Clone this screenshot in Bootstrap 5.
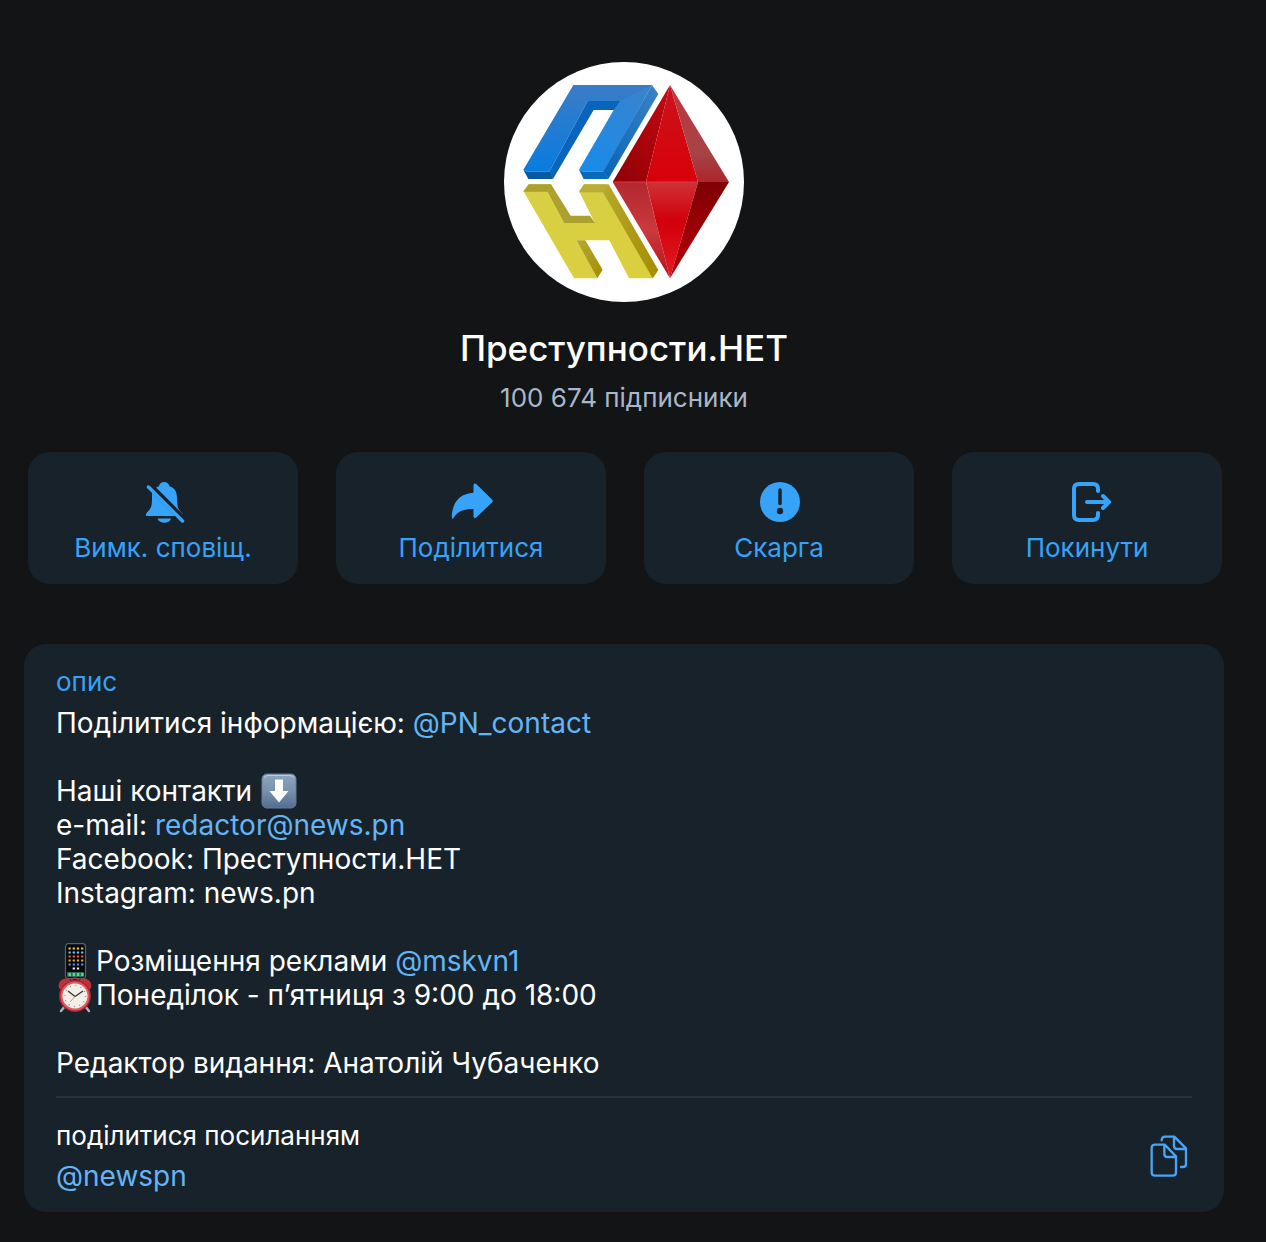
<!DOCTYPE html>
<html lang="uk">
<head>
<meta charset="utf-8">
<meta name="viewport" content="width=device-width, initial-scale=1">
<title>Преступности.НЕТ</title>
<link href="https://cdn.jsdelivr.net/npm/bootstrap@5.3.0/dist/css/bootstrap.min.css" rel="stylesheet">
<style>
  body { background: #131416; color: #fff; font-family: Inter, "Noto Sans", sans-serif; font-size: 28px; line-height: 34px; }
  a { color: #64b5f6; text-decoration: none; }
  a:hover { text-decoration: underline; }
  .profile { padding: 62px 42px 30px 24px; }
  .avatar { width: 240px; height: 240px; }
  .channel-name { font-size: 35px; line-height: 44px; font-weight: 500; margin: 24px 0 0; }
  .subscribers { font-size: 26px; line-height: 34px; color: #a9b7c8; margin: 11px 0 0; }
  .actions { gap: 38px; margin: 37px 2px 60px 4px; }
  .action { flex: 1 1 0; min-width: 0; height: 132px; padding: 28px 8px 19px; border-radius: 22px; border: 0; background: #18222b; color: #36a3f8; font-size: 26px; line-height: 34px; }
  .action:hover, .action:active { background: #202c37 !important; color: #36a3f8 !important; }
  .action svg { width: 44px; height: 44px; margin-bottom: 7px; overflow: visible; }
  .info { background: #18222b; border-radius: 22px; padding: 21px 32px 19px; }
  .caption { font-size: 26px; line-height: 34px; margin: 0; }
  .accent { color: #36a3f8; }
  .about { margin: 7px 0 16px; white-space: pre-line; }
  .emoji { width: 36px; height: 36px; margin: -6px 3px -3px 1px; vertical-align: -5px; }
  .share { border-top: 2px solid #26323e; padding-top: 21px; }
  .handle { margin-top: 6px; }
  .copy { padding: 0; border: 0; background: none; color: #46a5f5; line-height: 0; margin-right: 4px; }
  .copy svg { width: 38px; height: 42px; }
</style>
<script defer src="https://cdn.jsdelivr.net/npm/bootstrap@5.3.0/dist/js/bootstrap.bundle.min.js"></script>
</head>
<body>
<main class="profile">
  <header class="d-flex flex-column align-items-center text-center">
    <svg class="avatar" viewBox="12 21 720 720" role="img" aria-label="Логотип">
      <defs>
        <linearGradient id="bl" x1="0" y1="0" x2="0" y2="1"><stop offset="0" stop-color="#3b7cc6"/><stop offset="1" stop-color="#087ce0"/></linearGradient>
        <linearGradient id="br" x1="1" y1="0" x2="0" y2="1"><stop offset="0" stop-color="#3b82cc"/><stop offset="1" stop-color="#168ceb"/></linearGradient>
        <linearGradient id="bs" x1="1" y1="0" x2="0" y2="1"><stop offset="0" stop-color="#3c82c6"/><stop offset="1" stop-color="#0863b5"/></linearGradient>
        <linearGradient id="ye" x1="0" y1="0" x2="1" y2="1"><stop offset="0" stop-color="#d8cf45"/><stop offset="1" stop-color="#dacf3e"/></linearGradient>
        <linearGradient id="ys" x1="0" y1="0" x2="1" y2="1"><stop offset="0" stop-color="#b6a92d"/><stop offset="1" stop-color="#a58c02"/></linearGradient>
        <linearGradient id="r1" x1="1" y1="0" x2="0" y2="1"><stop offset="0" stop-color="#c60814"/><stop offset="1" stop-color="#8e0005"/></linearGradient>
        <linearGradient id="r2" x1="0" y1="0" x2="0" y2="1"><stop offset="0" stop-color="#c9141c"/><stop offset="1" stop-color="#d90008"/></linearGradient>
        <linearGradient id="r3" x1="0" y1="0" x2="0" y2="1"><stop offset="0" stop-color="#c4333a"/><stop offset=".7" stop-color="#a54448"/><stop offset="1" stop-color="#ad252b"/></linearGradient>
        <linearGradient id="r4" x1="0" y1="0" x2="0" y2="1"><stop offset="0" stop-color="#b2282f"/><stop offset=".5" stop-color="#ca393e"/><stop offset="1" stop-color="#b81019"/></linearGradient>
        <linearGradient id="r5" x1="0" y1="0" x2="0" y2="1"><stop offset="0" stop-color="#ce3138"/><stop offset=".4" stop-color="#d2000a"/><stop offset="1" stop-color="#e31b25"/></linearGradient>
        <linearGradient id="r6" x1="0" y1="0" x2="0" y2="1"><stop offset="0" stop-color="#7e0004"/><stop offset="1" stop-color="#b9000a"/></linearGradient>
      </defs>
      <circle cx="372" cy="381" r="360" fill="#fff"/>
      <path fill="url(#br)" d="M456 90 312 350H250L237 344 358 136 400 90z"/>
      <path fill="url(#bl)" d="M220 90H456L360 138H263L148 350H82L70 344z"/>
      <path fill="#0964bd" d="M263 138H360L342 165H281L159 372 148 350z"/>
      <path fill="url(#bs)" d="M456 90 475 117 325 372 310 350z"/>
      <path fill="#0759a4" d="M70 344 82 350H150L159 372H85z"/>
      <path fill="#0b69bc" d="M237 344 250 350H311L325 372H251z"/>
      <path fill="url(#ye)" d="M70 408 86 388H153L210 503H284L237 408 252 388H318L459 642 475 645 458 670H387L328 556H229L292 670H222z"/>
      <path fill="#aca12e" d="M86 388H153L212 482H270L285 504H193L143 410H70z"/>
      <path fill="#b9ad38" d="M252 388H326L310 412H237z"/>
      <path fill="url(#ys)" d="M326 388 475 645 458 670 308 410z"/>
      <path fill="url(#ys)" d="M229 556H256L308 644 292 670z"/>
      <path fill="url(#r1)" d="M510 90 338 381H438z"/>
      <path fill="url(#r2)" d="M510 90 438 381H594z"/>
      <path fill="url(#r3)" d="M510 90 594 381H687z"/>
      <path fill="url(#r4)" d="M338 381H438L510 670z"/>
      <path fill="url(#r5)" d="M438 381H594L510 670z"/>
      <path fill="url(#r6)" d="M594 381H687L510 670z"/>
      <path fill="none" stroke="#dc3a40" stroke-width="3" d="M340 381H594"/>
    </svg>
    <h1 class="channel-name">Преступности.НЕТ</h1>
    <p class="subscribers">100 674 підписники</p>
  </header>

  <div class="actions d-flex">
    <button type="button" class="action btn d-flex flex-column align-items-center">
      <svg viewBox="-1 0 44 44" fill="currentColor" aria-hidden="true"><path d="M13 8.500C15 7 16 6.500 17 6.200C18 .7 26 .7 27.500 6.200C33 8 35 12 35 18C35 27 36.500 30 40.500 33.500V36H4.500C3.200 34.500 4 33.500 5.500 32C9.500 28 10 25 10 19V13z"/><path d="M15.500 38.500H29C27.500 44.300 17.500 44.300 15.500 38.500z"/><path d="M6 4 44 42" stroke="#18222b" stroke-width="6.500"/><path d="M6.500 7 40.500 41" stroke="currentColor" stroke-width="3.500" stroke-linecap="round"/></svg>
      <span>Вимк. сповіщ.</span>
    </button>
    <button type="button" class="action btn d-flex flex-column align-items-center">
      <svg viewBox="0 0 44 44" fill="currentColor" aria-hidden="true"><path d="M24.500 5.500C24.500 3.300 26 3 27.500 4.300L43 19.500Q44.500 21 43 22.500L27.500 37.200C26 38.600 24.500 38 24.500 36.200V29C14 29 8.500 31.500 4.500 38C3.800 39 2.800 38.800 2.800 37.500C3 22 11 13.500 24.500 12.800z"/></svg>
      <span>Поділитися</span>
    </button>
    <button type="button" class="action btn d-flex flex-column align-items-center">
      <svg viewBox="0 0 44 44" aria-hidden="true"><circle cx="23" cy="22" r="20" fill="currentColor"/><path d="M23 10V23.500" stroke="#18222b" stroke-width="3.500" stroke-linecap="round"/><circle cx="23" cy="31" r="3.200" fill="#18222b"/></svg>
      <span>Скарга</span>
    </button>
    <button type="button" class="action btn d-flex flex-column align-items-center">
      <svg viewBox="0 0 44 44" fill="none" stroke="currentColor" stroke-width="4" stroke-linecap="round" stroke-linejoin="round" aria-hidden="true"><path d="M33 11V9Q33 4 28 4H14Q9 4 9 9V35Q9 40 14 40H28Q33 40 33 35V33M22 22H44M38 16 44 22 38 28"/></svg>
      <span>Покинути</span>
    </button>
  </div>

  <section class="info">
    <h2 class="caption accent fw-normal">опис</h2>
    <div class="about">Поділитися інформацією: <a href="#">@PN_contact</a>

Наші контакти <svg class="emoji" viewBox="0 0 36 36" role="img" aria-label="Стрілка вниз"><defs><linearGradient id="key" x1="0" y1="0" x2="0" y2="1"><stop offset="0" stop-color="#8da7bf"/><stop offset=".5" stop-color="#7891ac"/><stop offset="1" stop-color="#526d90"/></linearGradient></defs><rect x="1" y="1" width="34" height="34" rx="5" fill="url(#key)" stroke="#647d98"/><path d="M3 5Q4 2.500 7 2.500H29Q32 2.500 33 5" fill="none" stroke="#bad0df" stroke-width="1"/><path fill="#fff" d="M14 6.500H22V18H27.500L18 29.500 8.500 18H14z"/></svg>
e-mail: <a href="mailto:redactor@news.pn">redactor@news.pn</a>
Facebook: Преступности.НЕТ
Instagram: news.pn

<svg class="emoji" viewBox="0 0 36 36" role="img" aria-label="Телефон"><rect x="8.500" y=".7" width="20" height="35" rx="3" fill="#07090b" stroke="#59636b" stroke-width="1.200"/><path d="M11.500 5.500H26.500" stroke="#f4c744" stroke-width="2.200" stroke-dasharray="2.200 2"/><path d="M11.500 9.500H26.500" stroke="#75c8f0" stroke-width="2.200" stroke-dasharray="2.200 2"/><path d="M11.500 13.500H26.500" stroke="#ee5b48" stroke-width="2.200" stroke-dasharray="2.200 2"/><path d="M11.500 17.500H26.500" stroke="#e8a240" stroke-width="2.200" stroke-dasharray="2.200 2"/><path d="M11.500 21.500H26.500" stroke="#5c90e6" stroke-width="2.200" stroke-dasharray="2.200 2"/><path d="M15.700 25.500H22.500" stroke="#eee" stroke-width="2.200" stroke-dasharray="2.200 2"/><rect x="10" y="29" width="17" height="5" rx="1" fill="#2c6b62"/><path d="M11.500 31.500H26.500" stroke="#59dc70" stroke-width="2.800" stroke-dasharray="2.400 1.800"/></svg>Розміщення реклами <a href="#">@mskvn1</a>
<svg class="emoji" viewBox="0 0 36 36" role="img" aria-label="Будильник"><path d="M8 29 4 34M28 29 32 34" stroke="#aab2b7" stroke-width="2.500" stroke-linecap="round"/><path d="M2 11C0 5 6 0 12 2L15 5 5 14zM34 11C36 5 30 0 24 2L21 5 31 14z" fill="#bd303a"/><path d="M14 3Q18 -1 22 3" fill="none" stroke="#b53a43" stroke-width="1.500"/><circle cx="18" cy="19" r="16" fill="#b3222d"/><circle cx="18" cy="19" r="14.500" fill="#d95d63"/><circle cx="18" cy="19" r="12.500" fill="#f3eee7"/><circle cx="18" cy="19" r="10.500" fill="none" stroke="#9b958d" stroke-width="1.500" stroke-dasharray="1 4.500"/><path d="M11 14 18 19.500 26 14" fill="none" stroke="#34373b" stroke-width="1.400"/><path d="M18 19.500 13 25" stroke="#d8a23b" stroke-width="1"/></svg>Понеділок - п’ятниця з 9:00 до 18:00

Редактор видання: Анатолій Чубаченко</div>
    <div class="share d-flex justify-content-between align-items-center">
      <div>
        <p class="caption">поділитися посиланням</p>
        <a class="handle d-block" href="#">@newspn</a>
      </div>
      <button type="button" class="copy" aria-label="Копіювати посилання">
        <svg viewBox="60 162 114 126" fill="none" stroke="currentColor" stroke-width="7" stroke-linecap="round" stroke-linejoin="round" aria-hidden="true"><path d="M75 191H104L138 226V274Q138 284 128 284H75Q65 284 65 274V201Q65 191 75 191zM103 192V219Q103 228 112 228H137"/><path d="M95 178Q95 167 106 167H133L168 202V248Q168 258 158 258H153M132 168V195Q132 204 141 204H167"/></svg>
      </button>
    </div>
  </section>
</main>
</body>
</html>
